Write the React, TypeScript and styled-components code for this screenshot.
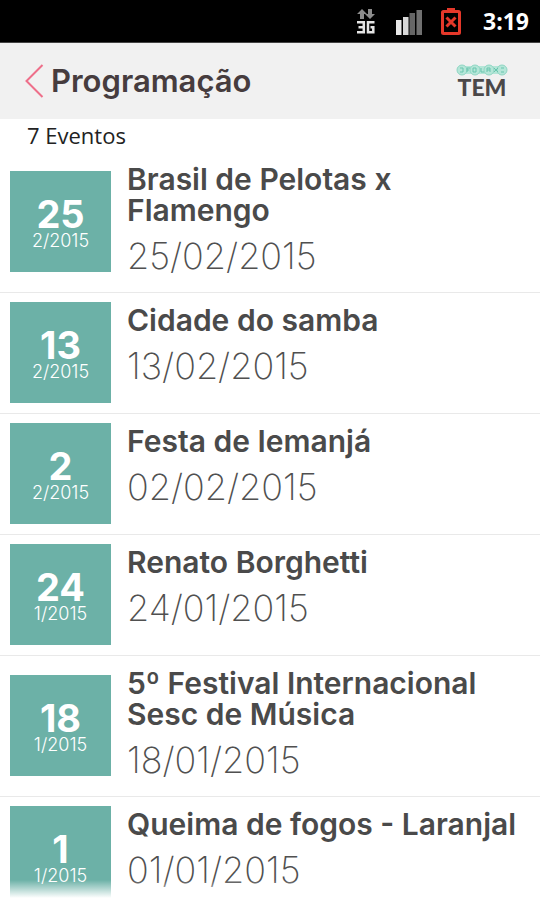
import React from "react";
import styled, { createGlobalStyle } from "styled-components";

const GlobalStyle = createGlobalStyle`
  *, *::before, *::after { box-sizing: border-box; }
  html, body, #root { height: 100%; }
  body {
    margin: 0;
    overflow: hidden;
    background: #ffffff;
    font-family: Inter, "Open Sans", sans-serif;
  }
`;

const Screen = styled.div`
  display: flex;
  flex-direction: column;
  height: 100%;
  position: relative;
`;

const StatusBar = styled.div`
  flex: none;
  display: flex;
  align-items: center;
  justify-content: flex-end;
  height: 43px;
  padding: 0 11px 0 0;
  background: #000000;
  color: #ffffff;
  border-bottom: 1px solid #444444;
`;

const NetworkIcon = styled.svg`
  width: 20px;
  height: 28px;
  margin-right: 19px;
`;

const SignalIcon = styled.svg`
  width: 28px;
  height: 28px;
  margin-right: 18px;
`;

const BatteryIcon = styled.svg`
  width: 20px;
  height: 28px;
  margin-right: 22px;
`;

const Clock = styled.time`
  font: 700 23px/32px "Open Sans", "Noto Sans", sans-serif;
`;

const Header = styled.header`
  flex: none;
  display: flex;
  align-items: center;
  justify-content: space-between;
  height: 76px;
  padding: 0 32px 0 20px;
  background: #f1f1f1;
`;

const BackButton = styled.button`
  display: flex;
  align-items: center;
  gap: 6px;
  padding: 0 4px;
  border: 0;
  background: none;
  color: #463c3e;
  font: inherit;
  cursor: pointer;
`;

const BackIcon = styled.svg`
  width: 21px;
  height: 36px;
`;

const Heading = styled.h1`
  margin: 0;
  font-size: 31px;
  line-height: 36px;
  font-weight: 600;
`;

const Logo = styled.a`
  display: flex;
  flex-direction: column;
  align-items: center;
  color: #4b4849;
  text-decoration: none;
`;

const LogoMark = styled.svg`
  width: 52px;
  height: 12px;
`;

const LogoText = styled.span`
  font: 900 23px/22px Lato, sans-serif;
`;

const Count = styled.p`
  flex: none;
  margin: 0;
  padding: 0 27px;
  font: 400 22px/33px "Open Sans", "Noto Sans", sans-serif;
  color: #222222;
`;

const List = styled.ul`
  flex: 1;
  min-height: 0;
  margin: 0;
  padding: 0;
  list-style: none;
  overflow: hidden;
`;

const Row = styled.li`
  display: flex;
  gap: 16px;
  padding: 0 10px;
  border-bottom: 1px solid #e9e9e9;
`;

const DateTile = styled.div`
  flex: none;
  align-self: center;
  display: flex;
  flex-direction: column;
  align-items: center;
  width: 101px;
  height: 101px;
  margin: 9px 0 10px;
  padding-top: 25px;
  background: #6cb1a7;
  color: #ffffff;
`;

const Day = styled.strong`
  font-size: 38px;
  line-height: 36px;
  font-weight: 700;
`;

const Month = styled.span`
  font-size: 18px;
  line-height: 18px;
  font-weight: 300;
`;

const Details = styled.div`
  flex: 1;
  min-width: 0;
  padding: 12px 0 14px;
`;

const Title = styled.h2`
  margin: 0 0 8px;
  color: #4a4a4a;
  font-size: 30px;
  line-height: 31px;
  font-weight: 600;
`;

const FullDate = styled.time`
  display: block;
  color: #505050;
  font-size: 36px;
  line-height: 44px;
  font-weight: 200;
`;

const BottomFade = styled.div`
  position: absolute;
  left: 0;
  right: 0;
  bottom: 0;
  height: 20px;
  background: linear-gradient(rgba(255, 255, 255, 0), #ffffff 90%);
`;

interface EventItem {
  title: string;
  date: string;
}

const events: EventItem[] = [
  { title: "Brasil de Pelotas x Flamengo", date: "25/02/2015" },
  { title: "Cidade do samba", date: "13/02/2015" },
  { title: "Festa de Iemanjá", date: "02/02/2015" },
  { title: "Renato Borghetti", date: "24/01/2015" },
  { title: "5º Festival Internacional Sesc de Música", date: "18/01/2015" },
  { title: "Queima de fogos - Laranjal", date: "01/01/2015" },
];

function EventRow({ title, date }: EventItem) {
  const [day, month, year] = date.split("/");
  return (
    <Row>
      <DateTile>
        <Day>{Number(day)}</Day>
        <Month>{`${Number(month)}/${year}`}</Month>
      </DateTile>
      <Details>
        <Title>{title}</Title>
        <FullDate dateTime={`${year}-${month}-${day}`}>{date}</FullDate>
      </Details>
    </Row>
  );
}

export default function App() {
  return (
    <>
      <GlobalStyle />
      <Screen>
        <StatusBar>
          <NetworkIcon viewBox="0 0 20 28" aria-label="3G">
            <path d="M6 2 1 7h3v5h4V7h3zM14 12l5-5h-3V2h-4v5H9z" fill="#8c8c8c" />
            <path
              d="M1 15.200h6.800v10H1M2.500 20.200h5M18.500 15.200h-6.500v10h5.300v-5h-2.800"
              fill="none"
              stroke="#e4e4e4"
              strokeWidth="2.500"
            />
          </NetworkIcon>
          <SignalIcon viewBox="0 0 28 28" aria-label="Sinal">
            <path d="M1 13h5.500v15H1z" fill="#e8e8e8" />
            <path d="M8 10h5.500v18H8z" fill="#d8d8d8" />
            <path d="M14.500 6H20v22h-5.500z" fill="#666666" />
            <path d="M21.500 3H27v25h-5.500z" fill="#707070" />
          </SignalIcon>
          <BatteryIcon viewBox="0 0 20 28" aria-label="Bateria">
            <path d="M6 1h8v4H6z" fill="#e5382a" />
            <rect x="1.500" y="4.500" width="17" height="22" rx="1" fill="none" stroke="#e5382a" strokeWidth="3" />
            <path d="m5.500 10.500 9 9M14.500 10.500l-9 9" stroke="#e5382a" strokeWidth="3" />
          </BatteryIcon>
          <Clock>3:19</Clock>
        </StatusBar>
        <Header>
          <BackButton type="button">
            <BackIcon viewBox="0 0 21 36" aria-hidden="true">
              <path d="M18.500 2 2.500 18l16 16" fill="none" stroke="#ee6f8a" strokeWidth="2" />
            </BackIcon>
            <Heading>Programação</Heading>
          </BackButton>
          <Logo href="#" aria-label="TEM">
            <LogoMark viewBox="0 0 52 12" aria-hidden="true">
              <path d="M6 6h40" stroke="#b5e6d8" strokeWidth="8" />
              <g fill="#b5e6d8" stroke="#8fd6c3" strokeWidth="1">
                <circle cx="6" cy="6" r="5" />
                <circle cx="19" cy="6" r="5" />
                <circle cx="33" cy="6" r="5" />
                <circle cx="46" cy="6" r="5" />
              </g>
              <path
                d="M4 4h3v4H4M11 4v4m0-4h3m-3 2h2M17 4h3v4h-3zM25 4v4h3M31 8V4h3v4m-3-2h3M38 4l4 4m0-4-4 4M45 4h3M45 8h3"
                fill="none"
                stroke="#68c4ad"
                strokeWidth="1"
              />
            </LogoMark>
            <LogoText>TEM</LogoText>
          </Logo>
        </Header>
        <Count>7 Eventos</Count>
        <List>
          {events.map((event) => (
            <EventRow key={event.date} {...event} />
          ))}
        </List>
        <BottomFade />
      </Screen>
    </>
  );
}
